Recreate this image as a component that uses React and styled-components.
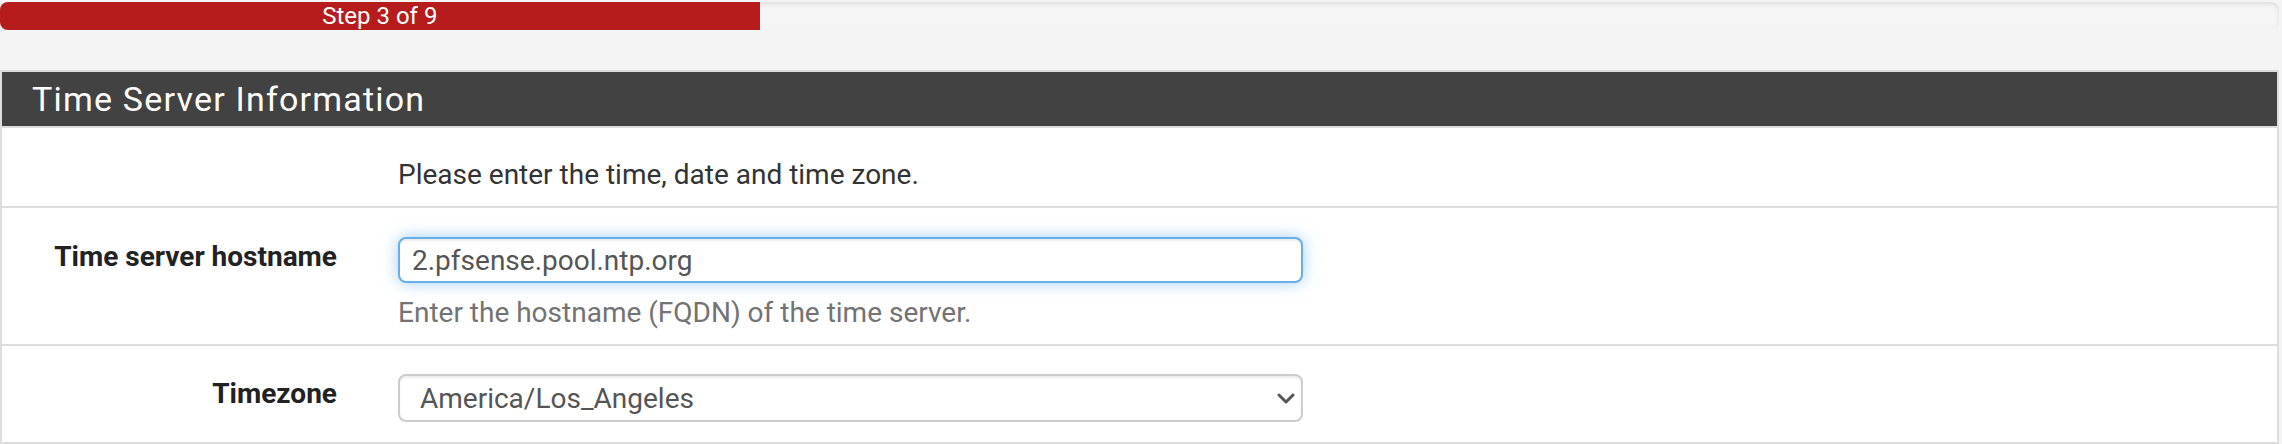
import React from "react";
import styled, { createGlobalStyle } from "styled-components";

const GlobalStyle = createGlobalStyle`
  html, body {
    margin: 0;
    padding: 0;
    background: #f4f4f4;
  }
  body {
    font-family: Roboto, "Liberation Sans", Arial, sans-serif;
    color: #333;
  }
  * { box-sizing: border-box; }
`;

const Page = styled.div`
  width: 2279px;
  padding-top: 2px;
`;

const Progress = styled.div`
  height: 28px;
  border-radius: 8px;
  background: #f5f5f5;
  box-shadow: inset 0 2px 4px rgba(0, 0, 0, 0.1);
  overflow: hidden;
  display: flex;
`;

const ProgressBar = styled.div`
  height: 100%;
  background: #b71c1c;
  color: #fff;
  font-size: 24px;
  line-height: 28px;
  text-align: center;
  white-space: nowrap;
`;

const Panel = styled.section`
  margin-top: 40px;
  background: #fff;
  border: 2px solid #dddddd;
  border-bottom-width: 0;
`;

const PanelHeading = styled.div`
  height: 56px;
  background: #424242;
  border-bottom: 2px solid #dddddd;
  display: flex;
  align-items: center;
  padding: 0 30px;
`;

const PanelTitle = styled.h2`
  margin: 0;
  color: #fff;
  font-size: 34px;
  font-weight: 400;
  letter-spacing: 1.2px;
  line-height: 1;
`;

const Row = styled.div`
  display: grid;
  grid-template-columns: 335px 905px;
  column-gap: 61px;
  align-items: start;
  padding: ${(p) => p.$pad};
  border-bottom: 2px solid #dddddd;
`;

const Label = styled.label`
  text-align: right;
  font-size: 28px;
  font-weight: 700;
  line-height: 40px;
  color: #222;
`;

const Cell = styled.div`
  display: flex;
  flex-direction: column;
`;

const Text = styled.p`
  margin: 0;
  font-size: 28px;
  line-height: 40px;
  color: #333;
`;

const Input = styled.input`
  width: 905px;
  height: 46px;
  margin: 0;
  padding: 0 12px;
  font-family: Roboto, "Liberation Sans", Arial, sans-serif;
  font-size: 28px;
  color: #555;
  background: #fff;
  border: 2px solid #66afe9;
  border-radius: 8px;
  outline: none;
  box-shadow: inset 0 2px 2px rgba(0, 0, 0, 0.075), 0 0 16px rgba(102, 175, 233, 0.6);
`;

const Help = styled.span`
  margin-top: 10px;
  font-size: 28px;
  line-height: 40px;
  color: #737373;
`;

const SelectWrap = styled.div`
  position: relative;
  width: 905px;
`;

const Select = styled.select`
  appearance: none;
  -webkit-appearance: none;
  width: 905px;
  height: 48px;
  margin: 0;
  padding: 0 40px 0 20px;
  font-family: Roboto, "Liberation Sans", Arial, sans-serif;
  font-size: 28px;
  color: #555;
  background: #fff;
  border: 2px solid #cccccc;
  border-radius: 8px;
  outline: none;
  box-shadow: inset 0 2px 2px rgba(0, 0, 0, 0.075);
`;

const Chevron = styled.svg`
  position: absolute;
  right: 8px;
  top: 19px;
  width: 18px;
  height: 11px;
  pointer-events: none;
`;

export default function App() {
  return (
    <>
      <GlobalStyle />
      <Page>
        <Progress>
          <ProgressBar style={{ width: `${(3 / 9) * 100}%` }}>Step 3 of 9</ProgressBar>
        </Progress>
        <Panel>
          <PanelHeading>
            <PanelTitle>Time Server Information</PanelTitle>
          </PanelHeading>
          <Row $pad="27px 0 11px">
            <span />
            <Text>Please enter the time, date and time zone.</Text>
          </Row>
          <Row $pad="29px 0 11px">
            <Label htmlFor="timeserver">Time server hostname</Label>
            <Cell>
              <Input id="timeserver" defaultValue="2.pfsense.pool.ntp.org" />
              <Help>Enter the hostname (FQDN) of the time server.</Help>
            </Cell>
          </Row>
          <Row $pad="28px 0 20px">
            <Label htmlFor="timezone">Timezone</Label>
            <SelectWrap>
              <Select id="timezone" defaultValue="America/Los_Angeles">
                <option>America/Los_Angeles</option>
                <option>America/New_York</option>
                <option>Europe/London</option>
              </Select>
              <Chevron viewBox="0 0 18 11" fill="none">
                <path d="M2 2 L9 9 L16 2" stroke="#555" strokeWidth="3" strokeLinecap="round" strokeLinejoin="round" />
              </Chevron>
            </SelectWrap>
          </Row>
        </Panel>
      </Page>
    </>
  );
}
